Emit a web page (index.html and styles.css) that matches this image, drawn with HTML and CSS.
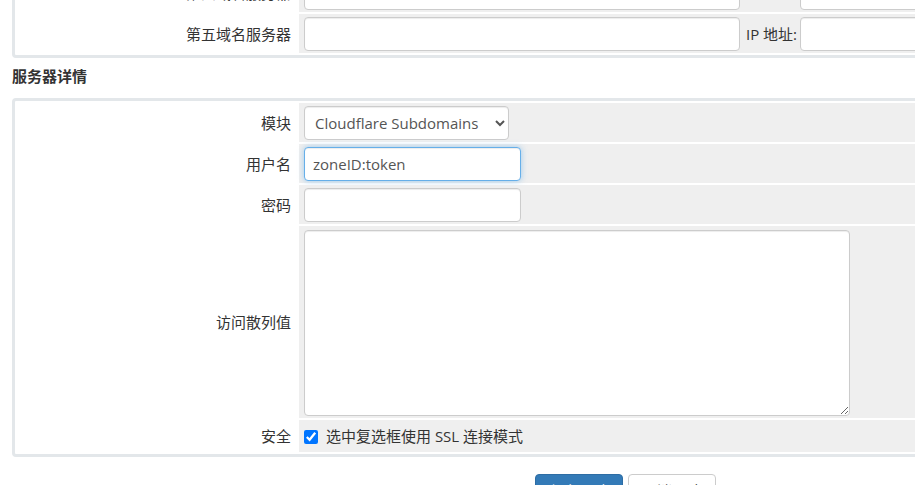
FILE: index.html
```html
<!DOCTYPE html>
<html lang="zh-CN">
<head>
<meta charset="utf-8">
<title>服务器详情</title>
<link rel="stylesheet" href="styles.css">
</head>
<body>
<div class="page">
  <div class="box box-first">
    <table class="form">
      <colgroup><col class="col-label"><col></colgroup>
      <tr>
        <td class="fieldlabel">第四域名服务器</td>
        <td class="fieldarea">
          <div class="inline-fields">
            <input type="text" class="form-control input-ns">
            <span class="ip-label">IP 地址:</span>
            <input type="text" class="form-control input-ip">
          </div>
        </td>
      </tr>
      <tr>
        <td class="fieldlabel">第五域名服务器</td>
        <td class="fieldarea">
          <div class="inline-fields">
            <input type="text" class="form-control input-ns">
            <span class="ip-label">IP 地址:</span>
            <input type="text" class="form-control input-ip">
          </div>
        </td>
      </tr>
    </table>
  </div>

  <h2 class="section-title">服务器详情</h2>

  <div class="box">
    <table class="form">
      <colgroup><col class="col-label"><col></colgroup>
      <tr>
        <td class="fieldlabel">模块</td>
        <td class="fieldarea">
          <select class="form-control select-module">
            <option>Cloudflare Subdomains</option>
          </select>
        </td>
      </tr>
      <tr>
        <td class="fieldlabel">用户名</td>
        <td class="fieldarea">
          <input type="text" class="form-control input-short is-focused" value="zoneID:token">
        </td>
      </tr>
      <tr>
        <td class="fieldlabel">密码</td>
        <td class="fieldarea">
          <input type="password" class="form-control input-short">
        </td>
      </tr>
      <tr>
        <td class="fieldlabel">访问散列值</td>
        <td class="fieldarea area-textarea">
          <textarea class="form-control textarea-hash"></textarea>
        </td>
      </tr>
      <tr>
        <td class="fieldlabel">安全</td>
        <td class="fieldarea area-check">
          <label class="check-label"><input type="checkbox" checked class="check"><span>选中复选框使用 SSL 连接模式</span></label>
        </td>
      </tr>
    </table>
  </div>

  <div class="actions">
    <button class="btn btn-primary">保存更改</button>
    <button class="btn btn-default">取消更改</button>
  </div>
</div>
</body>
</html>
```

FILE: styles.css
```css
html, body {
  margin: 0;
  padding: 0;
  overflow: hidden;
  background: #fff;
}

body {
  font-family: "Open Sans", "Noto Sans CJK SC", sans-serif;
  font-size: 15px;
  line-height: 21px;
  color: #333;
}

.page {
  width: 1227px;
  margin: -32px 0 0 12px;
}

.box {
  border: 3px solid #e3e7ea;
  border-radius: 4px;
  background: #fff;
}

.form {
  width: 100%;
  border-collapse: separate;
  border-spacing: 2px;
  table-layout: fixed;
}

.col-label {
  width: 280px;
}

.form td {
  padding: 3px 5px 2px 5px;
  vertical-align: middle;
}

.fieldlabel {
  text-align: right;
  background: #fff;
  padding-right: 6px !important;
  white-space: nowrap;
}

.fieldarea {
  background: #efefef;
}

.form-control {
  display: block;
  box-sizing: border-box;
  height: 34px;
  padding: 6px 8px;
  font-family: "Open Sans", "Noto Sans CJK SC", sans-serif;
  font-size: 15px;
  color: #555;
  background: #fff;
  border: 1px solid #ccc;
  border-radius: 4px;
  box-shadow: inset 0 1px 1px rgba(0, 0, 0, 0.075);
  margin: 0;
}

.inline-fields {
  display: flex;
  align-items: center;
}

.input-ns {
  width: 436px;
}

.ip-label {
  margin-left: 6px;
  margin-right: 3px;
  white-space: nowrap;
}

.input-ip {
  width: 200px;
}

.select-module {
  width: 205px;
  padding: 4px 6px;
}

.input-short {
  width: 217px;
}

.is-focused {
  border-color: #66afe9;
  outline: 0;
  box-shadow: inset 0 1px 1px rgba(0, 0, 0, 0.075), 0 0 6px rgba(102, 175, 233, 0.6);
}

.area-textarea {
  padding-top: 4px !important;
  padding-bottom: 2px !important;
}

.textarea-hash {
  width: 546px;
  height: 186px;
  resize: both;
}

.area-check {
  height: 27px;
}

.check-label {
  display: flex;
  align-items: center;
  gap: 8px;
}

.check {
  width: 14px;
  height: 14px;
  margin: 0;
}

.section-title {
  margin: 8px 0 11px 0;
  font-size: 15px;
  line-height: 21px;
  font-weight: bold;
  color: #333;
}

.actions {
  margin-top: 17px;
  display: flex;
  justify-content: center;
  gap: 5px;
}

.btn {
  font-family: "Open Sans", "Noto Sans CJK SC", sans-serif;
  font-size: 15px;
  line-height: 20px;
  padding: 6px 13px;
  border-radius: 4px;
  border: 1px solid transparent;
}

.btn-primary {
  background: #337ab7;
  border-color: #2e6da4;
  color: #fff;
}

.btn-default {
  background: #fff;
  border-color: #ccc;
  color: #333;
}
```
